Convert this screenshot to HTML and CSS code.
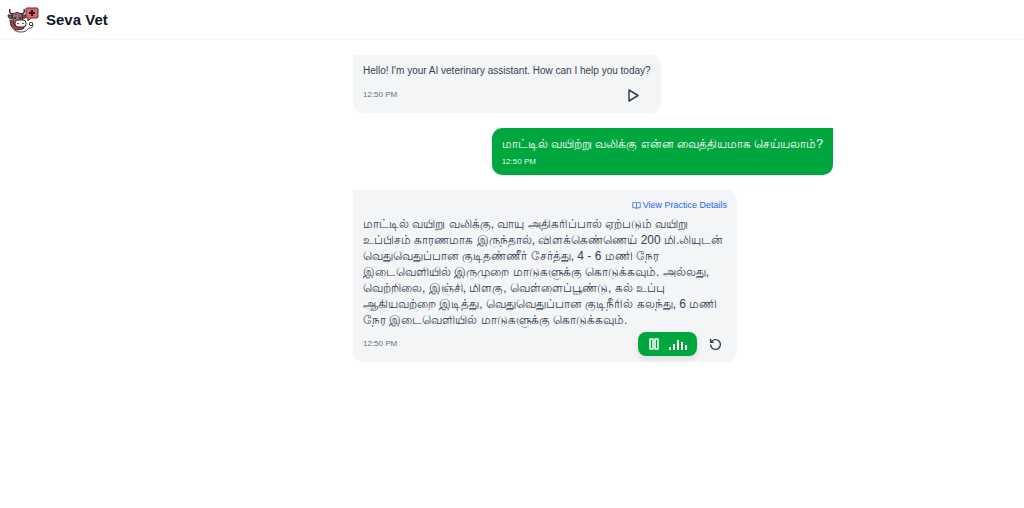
FILE: index.html
```html
<!DOCTYPE html>
<html lang="en">
<head>
  <meta charset="UTF-8">
  <title>Seva Vet</title>
  <meta name="viewport" content="width=device-width, initial-scale=1.0">
  <link rel="stylesheet" href="styles.css">
</head>
<body>

  <header>
    <svg class="logo" viewBox="0 0 32 26" aria-hidden="true">
      <!-- stethoscope -->
      <path d="M5 19c1 4 4 6 9 6 5 0 6-2 8-4 2 0 4 0 4-3" fill="none" stroke="#444" stroke-width="1"/>
      <circle cx="24" cy="17" r="1.700" fill="#fff" stroke="#333"/>
      <!-- cow -->
      <path d="M6 7c-3 0-4-2-3-5M14 7c3 0 4-2 3-5" fill="none" stroke="#3a2a2e" stroke-width="1.500"/>
      <path d="M5 8H1c0 3 2 4 4 4zM15 8h4c0 3-2 4-4 4z" fill="#7a4f57" stroke="#3a2a2e"/>
      <path d="M3 13l1 6 5 4 7-1 2-3z" fill="#b4434f" stroke="#3a2a2e"/>
      <path d="M5 7q5-3 10 0l1 11q-5 4-9 0z" fill="#94696f" stroke="#3a2a2e"/>
      <rect x="8" y="13" width="11" height="7" rx="3" fill="#f8efed" stroke="#3a2a2e"/>
      <path d="M11 16v1M16 16v1M8 10v2M13 10v2" stroke="#222" stroke-width="1.400"/>
      <!-- speech bubble -->
      <path d="M20 1h10q1 0 1 1v8q0 1-1 1h-6l-3 3v-3h-1q-1 0-1-1V2q0-1 1-1z" fill="#e2656c" stroke="#5a2a30"/>
      <path d="M25 3v6M22 6h6" stroke="#2b1518" stroke-width="2.200"/>
    </svg>
    <h1>Seva Vet</h1>
  </header>

  <main>
    <div class="chat">

      <div class="message bot greeting">
        <p>Hello! I'm your AI veterinary assistant. How can I help you today?</p>
        <div class="message-footer">
          <time>12:50 PM</time>
          <button class="icon-button play" aria-label="Play">
            <svg viewBox="0 0 13 13"><path d="M2 1l9 5.500-9 5.500z"/></svg>
          </button>
        </div>
      </div>

      <div class="message user">
        <p lang="ta">மாட்டில் வயிற்று வலிக்கு என்ன வைத்தியமாக செய்யலாம்?</p>
        <time>12:50 PM</time>
      </div>

      <div class="message bot answer">
        <a class="details" href="#details">
          <svg viewBox="0 0 24 24" aria-hidden="true"><path d="M12 6v15M2 4h7q3 0 3 3 0-3 3-3h7v14h-7q-3 0-3 3 0-3-3-3H2z"/></svg>
          View Practice Details
        </a>
        <p lang="ta">மாட்டில் வயிறு வலிக்கு, வாயு அதிகரிப்பால் ஏற்படும் வயிறு<br>
          உப்பிசம் காரணமாக இருந்தால், விளக்கெண்ணெய் 200 மி.லியுடன்<br>
          வெதுவெதுப்பான குடிதண்ணீர் சேர்த்து, 4 - 6 மணி நேர<br>
          இடைவெளியில் இருமுறை மாடுகளுக்கு கொடுக்கவும். அல்லது,<br>
          வெற்றிலை, இஞ்சி, மிளகு, வெள்ளைப்பூண்டு, கல் உப்பு<br>
          ஆகியவற்றை இடித்து, வெதுவெதுப்பான குடிநீரில் கலந்து, 6 மணி<br>
          நேர இடைவெளியில் மாடுகளுக்கு கொடுக்கவும்.</p>
        <div class="message-footer">
          <time>12:50 PM</time>
          <div class="controls">
            <button class="playing" aria-label="Pause">
              <svg class="pause" viewBox="0 0 10 12"><path d="M1 1h3v10H1zM6 1h3v10H6z"/></svg>
              <svg class="wave" viewBox="0 0 18 12"><path d="M1 9v3M5 6v6M9 2v10M13 4v8M17 7v5"/></svg>
            </button>
            <button class="icon-button" aria-label="Restart">
              <svg viewBox="0 0 24 24"><path d="M3 12a9 9 0 1 0 9-9 10 10 0 0 0-7 3L3 8M3 2v6h6"/></svg>
            </button>
          </div>
        </div>
      </div>

    </div>
  </main>

</body>
</html>
```
FILE: styles.css
```css
* {
  box-sizing: border-box;
}

body {
  margin: 0;
  font-family: "Liberation Sans", Arial, sans-serif;
  font-size: 10px;
  line-height: 16px;
  color: #364153;
  background: #fff;
}

header {
  display: flex;
  align-items: center;
  gap: 7px;
  height: 40px;
  padding: 0 7px;
  border-bottom: 1px solid #f8f9fa;
}

.logo {
  width: 32px;
  height: 26px;
}

h1 {
  margin: 0;
  font-size: 15px;
  line-height: 20px;
  color: #101828;
}

main {
  padding: 15px 0 15px 162px;
}

.chat {
  display: flex;
  flex-direction: column;
  align-items: flex-start;
  gap: 15px;
  max-width: 480px;
  margin: 0 auto;
}

.message {
  padding: 8px 10px 6px;
  border-radius: 10px;
}

.message p {
  margin: 0;
  white-space: nowrap;
}

.message p:lang(ta) {
  font-size: 12px;
}

.bot {
  background: #f3f5f7;
  border-top-left-radius: 0;
}

.user {
  align-self: flex-end;
  background: #00a63e;
  color: #fff;
  border-top-right-radius: 0;
}

.answer {
  width: 80%;
}

time {
  display: block;
  font-size: 8px;
  line-height: 14px;
  color: #6a7282;
}

.user time {
  margin-top: 3px;
  color: #dcfce7;
}

.message-footer {
  display: flex;
  align-items: center;
  justify-content: space-between;
  margin-top: 4px;
}

button {
  padding: 0;
  border: 0;
  background: none;
  color: inherit;
  cursor: pointer;
}

svg {
  display: block;
}

.icon-button svg,
.details svg,
.pause,
.wave {
  fill: none;
  stroke: currentColor;
  stroke-width: 2;
  stroke-linejoin: round;
}

.icon-button {
  display: flex;
  align-items: center;
  justify-content: center;
  width: 24px;
  height: 24px;
}

.icon-button svg {
  width: 13px;
  height: 13px;
  stroke-width: 2.5;
}

.icon-button.play {
  margin-right: 5px;
}

.icon-button.play svg {
  stroke-width: 1.5;
}

.details {
  display: flex;
  align-items: center;
  justify-content: flex-end;
  gap: 2px;
  margin-bottom: 4px;
  font-size: 9px;
  line-height: 14px;
  color: #2563eb;
  text-decoration: none;
}

.details svg {
  width: 9px;
  height: 9px;
}

.controls {
  display: flex;
  gap: 6px;
}

.playing {
  display: flex;
  align-items: center;
  justify-content: center;
  gap: 10px;
  width: 59px;
  height: 24px;
  border-radius: 8px;
  background: #00a63e;
  color: #fff;
  box-shadow: 0 3px 6px rgba(0, 0, 0, 0.1);
}

.pause {
  width: 10px;
  height: 12px;
  stroke-width: 1.5;
}

.wave {
  width: 18px;
  height: 12px;
}
```
